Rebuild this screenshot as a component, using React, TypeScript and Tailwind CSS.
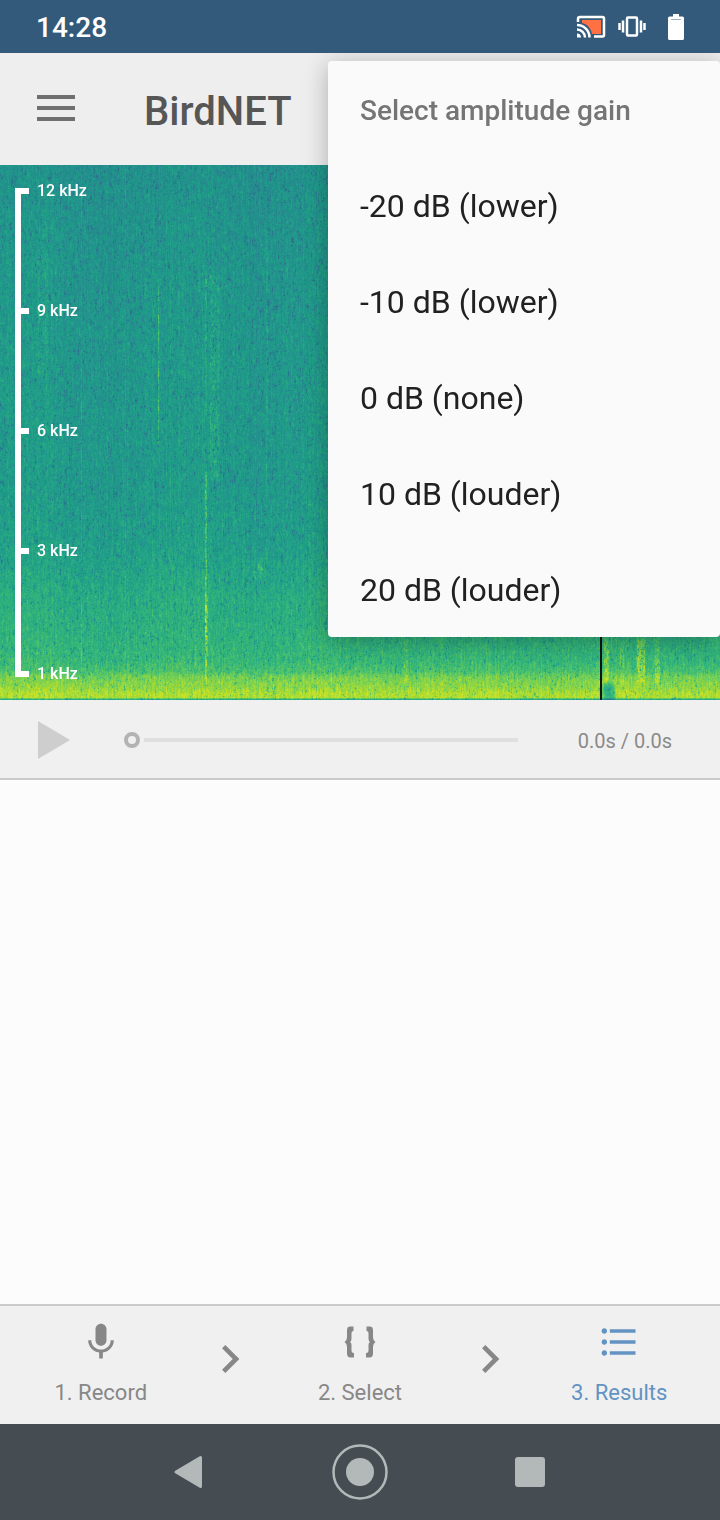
import { useEffect, useRef, useState } from 'react'
import { MdChevronRight, MdFormatListBulleted, MdMic } from 'react-icons/md'

const gains = ['-20 dB (lower)', '-10 dB (lower)', '0 dB (none)', '10 dB (louder)', '20 dB (louder)']
const frequencies = ['12 kHz', '9 kHz', '6 kHz', '3 kHz', '1 kHz']

// level -> colour, viridis map
const palette = [
  [68, 1, 84],
  [72, 40, 120],
  [62, 74, 137],
  [49, 104, 142],
  [38, 130, 142],
  [31, 158, 137],
  [53, 183, 121],
  [109, 205, 89],
  [180, 222, 44],
  [253, 231, 37],
]

const toColor = (level: number) => {
  const pos = Math.max(0, Math.min(0.92, level)) * (palette.length - 1)
  const i = Math.floor(pos)
  const t = pos - i
  return palette[i].map((c, k) => c + (palette[i + 1][k] - c) * t)
}

// average level by height, top of the band to the bottom
const profile = [
  [0, 0.5],
  [60, 0.515],
  [180, 0.53],
  [330, 0.54],
  [390, 0.565],
  [430, 0.61],
  [470, 0.635],
  [495, 0.665],
  [506, 0.71],
  [512, 0.79],
  [522, 0.83],
  [528, 0.88],
  [532, 0.88],
  [534, 0.62],
]

const profileAt = (y: number) => {
  for (let i = 1; i < profile.length; i++) {
    const [y0, v0] = profile[i - 1]
    const [y1, v1] = profile[i]
    if (y <= y1) return v0 + ((v1 - v0) * (y - y0)) / (y1 - y0)
  }
  return 0.6
}

// x, width, from, to, strength
const calls = [
  [158, 1, 110, 290, 0.15],
  [205, 2, 100, 250, 0.07],
  [205, 2, 300, 520, 0.14],
  [205, 3, 430, 500, 0.12],
  [210, 9, 100, 320, 0.045],
  [253, 2, 396, 412, 0.12],
  [258, 5, 393, 410, 0.1],
  [266, 2, 388, 404, 0.09],
  [81, 1, 0, 520, 0.06],
  [125, 1, 0, 500, 0.035],
  [38, 10, 70, 210, 0.025],
  [266, 2, 60, 340, 0.035],
  [404, 4, 472, 520, 0.07],
  [604, 5, 472, 520, 0.13],
  [620, 4, 472, 520, 0.06],
  [637, 8, 472, 520, 0.16],
  [655, 5, 472, 520, 0.08],
]

const Spectrogram = () => {
  const ref = useRef<HTMLCanvasElement>(null)

  useEffect(() => {
    const canvas = ref.current
    const ctx = canvas?.getContext('2d')
    if (!canvas || !ctx) return
    const { width, height } = canvas
    let seed = 1428
    const random = () => {
      seed = (seed * 1664525 + 1013904223) >>> 0
      return seed / 4294967296
    }
    const columns = Array.from({ length: width }, (_, x) => (random() - 0.5) * 0.035 + Math.sin(x / 23) * 0.008)
    const image = ctx.createImageData(width, height)
    const prev = new Float32Array(width)
    for (let y = 0; y < height; y++) {
      const base = profileAt(y)
      let left = 0
      for (let x = 0; x < width; x++) {
        const raw = random() + random() + random() - 1.5
        const noise = raw * 0.6 + prev[x] * 0.55 + left * 0.2
        prev[x] = noise
        left = raw
        let level = base + columns[x] + noise * 0.075
        if (noise < -0.7) level -= 0.07
        for (const [cx, w, from, to, strength] of calls) {
          if (x >= cx && x < cx + w && y >= from && y < to) {
            const fade = Math.min(1, (y - from) / 20 + 0.3, (to - y) / 20 + 0.3)
            level += strength * fade * (0.8 + noise * 0.6)
          }
        }
        // quiet patch right after the marker
        const patch = Math.hypot((x - 608) / 9, (y - 528) / 14)
        if (patch < 1) level -= 0.26 * (1 - patch * patch)
        const [r, g, b] = toColor(level)
        const i = (y * width + x) * 4
        image.data[i] = r
        image.data[i + 1] = g
        image.data[i + 2] = b
        image.data[i + 3] = 255
      }
    }
    ctx.putImageData(image, 0, 0)
    ctx.fillStyle = '#101414'
    ctx.fillRect(600, 0, 2, height)
  }, [])

  return (
    <div className="relative">
      <canvas ref={ref} width={720} height={535} className="block h-[535px] w-full bg-[#1f9289]" />
      <ul className="absolute top-[23px] left-[15px] grid grid-rows-[120px_120px_120px_123px_6px] border-l-6 border-white font-medium text-white">
        {frequencies.map((f) => (
          <li key={f} className="flex h-[6px] items-center gap-2 text-base leading-none">
            <span className="h-full w-2 bg-white" />
            {f}
          </li>
        ))}
      </ul>
    </div>
  )
}

const StatusBar = () => (
  <div className="relative z-20 flex h-[53px] items-center bg-[#335a7b] px-9 text-white">
    <span className="flex-1 pt-[2px] text-[28px] font-medium">14:28</span>
    <svg className="h-6 w-[30px]" viewBox="0 0 30 24" fill="none">
      <path d="M6 5h19v14h-9C15 13 11 9 6 8z" fill="#ff7043" />
      <path d="M2 7V4Q2 2 4 2h22.500Q28 2 28 4v16Q28 21.500 26.500 21.500H18" stroke="white" strokeWidth="2.500" />
      <path d="M1 10A12.500 12.500 0 0 1 13.500 22.500M1 14.500a8 8 0 0 1 8 8" stroke="white" strokeWidth="2.500" />
      <path d="M1 18.500a4 4 0 0 1 4 4H1z" fill="white" />
    </svg>
    <svg className="ml-3 h-6 w-7" viewBox="0 0 28 24" fill="none" stroke="white">
      <rect x="9" y="2.500" width="10" height="18" rx="1" strokeWidth="2.500" />
      <path d="M5 5.500v12M23 5.500v12M1.500 8v7M26.500 8v7" strokeWidth="2.500" />
    </svg>
    <svg className="ml-[22px] h-[26px] w-4" viewBox="0 0 16 26" fill="white">
      <path d="M5 0h6v2.500h3.500Q16 2.500 16 4v20.500Q16 26 14.500 26h-13Q0 26 0 24.500V4Q0 2.500 1.500 2.500H5z" />
      <path d="M3 5.500h10" stroke="#9fb0c0" />
    </svg>
  </div>
)

const GainMenu = () => (
  <div role="menu" aria-label="Select amplitude gain" className="absolute top-2 right-0 z-10 w-[392px] rounded-sm bg-[#fafafa] shadow-[0_4px_24px_rgba(0,0,0,0.28)]">
    <div className="flex h-24 items-center px-8 pt-1 text-[28px] font-medium text-[#757575]">Select amplitude gain</div>
    {gains.map((gain) => (
      <button key={gain} role="menuitem" className="flex h-24 w-full items-center px-8 pt-[2px] text-[32px] text-[#212121]">
        {gain}
      </button>
    ))}
  </div>
)

const Player = () => {
  const [position, setPosition] = useState(0)
  return (
    <div className="flex h-20 items-center border-b-2 border-[#cacaca] bg-[#f0f0f0] pt-[2px] pr-12 pl-9">
      <button aria-label="Play" className="w-[88px]">
        <svg className="h-10 w-9" viewBox="0 0 36 40" fill="#cecece">
          <path d="M2 1l32 19L2 39z" />
        </svg>
      </button>
      <input
        type="range"
        aria-label="Position"
        min={0}
        max={100}
        value={position}
        onChange={(e) => setPosition(Number(e.target.value))}
        className="h-1 min-w-0 flex-1 appearance-none bg-[#dfdfdf] [&::-webkit-slider-thumb]:size-4 [&::-webkit-slider-thumb]:appearance-none [&::-webkit-slider-thumb]:rounded-full [&::-webkit-slider-thumb]:border-4 [&::-webkit-slider-thumb]:border-[#b3b3b3] [&::-webkit-slider-thumb]:bg-[#f0f0f0] [&::-webkit-slider-thumb]:shadow-[0_0_0_4px_#f0f0f0]"
      />
      <span className="w-[154px] pt-[2px] text-right text-xl text-[#8a8a8a]">0.0s / 0.0s</span>
    </div>
  )
}

const BracesIcon = () => (
  <svg className="h-11 w-11" viewBox="0 0 44 44" fill="#878787">
    <path d="M15.500 6.500h-3.500Q9 6.500 9 10.500v6Q9 20.500 6.500 22Q9 23.500 9 27v6.500Q9 37.500 12.500 37.500h3.500v-4.500Q13.500 33 13.500 30.500V25Q13.500 22.500 12 22Q13.500 21 13.500 18.500V13Q13.500 11 15.500 11z" />
    <path d="M28.500 6.500h3.500Q35 6.500 35 10.500v6Q35 20.500 37.500 22Q35 23.500 35 27v6.500Q35 37.500 31.500 37.500h-3.500v-4.500Q30.500 33 30.500 30.500V25Q30.500 22.500 32 22Q30.500 21 30.500 18.500V13Q30.500 11 28.500 11z" />
  </svg>
)

const TabBar = () => (
  <nav className="grid h-[120px] grid-cols-5 border-t-2 border-[#cacaca] bg-[#f0f0f0] px-9 text-[22px] text-[#878787]">
    <a href="#record" className="flex flex-col items-center gap-[13px] pt-[14px] leading-[32px] whitespace-nowrap">
      <MdMic className="size-11" />
      1. Record
    </a>
    <MdChevronRight className="mt-[25px] size-14 place-self-start justify-self-center" />
    <a href="#select" className="flex flex-col items-center gap-[13px] pt-[14px] leading-[32px] whitespace-nowrap">
      <BracesIcon />
      2. Select
    </a>
    <MdChevronRight className="mt-[25px] size-14 place-self-start justify-self-center" />
    <a href="#results" aria-current="page" className="flex flex-col items-center gap-[13px] pt-[14px] leading-[32px] whitespace-nowrap text-[#6293c2]">
      <MdFormatListBulleted className="size-11" />
      3. Results
    </a>
  </nav>
)

const SystemNav = () => (
  <div className="flex h-24 items-center justify-center gap-[115px] bg-[#454d52]">
    <button aria-label="Back">
      <svg className="size-14" viewBox="0 0 56 56" fill="#b3b8b8" stroke="#b3b8b8" strokeWidth="3" strokeLinejoin="round">
        <path d="M15 28L39.500 13.500v29z" />
      </svg>
    </button>
    <button aria-label="Home">
      <svg className="size-14" viewBox="0 0 56 56" fill="#b3b8b8">
        <circle cx="28" cy="28" r="26.500" fill="none" stroke="#b3b8b8" strokeWidth="2.500" />
        <circle cx="28" cy="28" r="14" />
      </svg>
    </button>
    <button aria-label="Overview">
      <svg className="size-14" viewBox="0 0 56 56" fill="#b3b8b8">
        <rect x="12" y="13" width="30" height="30" rx="3" />
      </svg>
    </button>
  </div>
)

const App = () => {
  return (
    <div className="flex min-h-screen flex-col bg-[#fcfcfc] font-[Roboto,sans-serif]">
      <StatusBar />
      <header className="relative flex h-28 items-center bg-[#eeeeee] px-9">
        <button aria-label="Open menu" className="mr-[68px]">
          <svg className="h-10 w-10" viewBox="0 0 40 40" stroke="#6f6f6f" strokeWidth="4">
            <path d="M1 8h38M1 19h38M1 30h38" />
          </svg>
        </button>
        <h1 className="pt-[6px] text-[40px] font-medium text-[#565656]">BirdNET</h1>
        <GainMenu />
      </header>
      <Spectrogram />
      <Player />
      <main className="flex-1" />
      <TabBar />
      <SystemNav />
    </div>
  )
}

export default App
